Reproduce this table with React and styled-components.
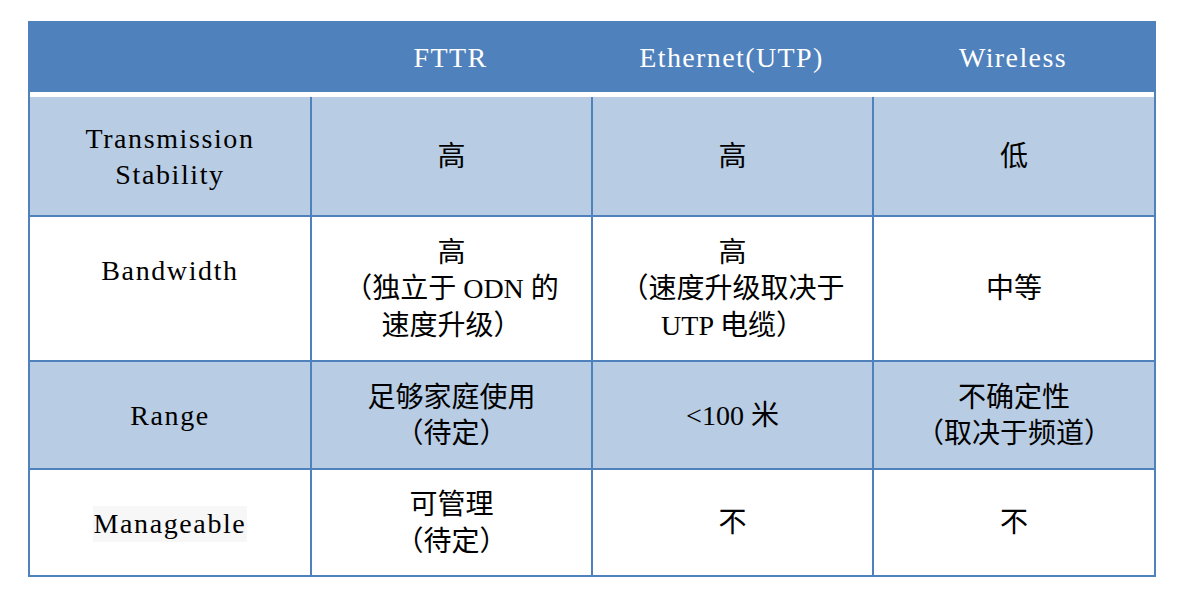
import styled, { createGlobalStyle } from "styled-components";

const GlobalStyle = createGlobalStyle`
body {
  margin: 0;
  background: #fff;
}
`

const rows = [
  {
    label: ["Transmission", "Stability"],
    shade: true,
    h: 118,
    cells: [["高"], ["高"], ["低"]],
  },
  {
    label: ["Bandwidth", "\u00a0"],
    shade: false,
    h: 143,
    cells: [["高", "（独立于 ODN 的速度升级）"], ["高", "（速度升级取决于 UTP 电缆）"], ["中等"]],
  },
  {
    label: ["Range"],
    shade: true,
    h: 106,
    cells: [["足够家庭使用", "（待定）"], ["<100 米"], ["不确定性", "（取决于频道）"]],
  },
  {
    label: ["Manageable"],
    mark: true,
    shade: false,
    h: 105,
    cells: [["可管理", "（待定）"], ["不"], ["不"]],
  },
]

const App = () => {
  return (
    <Page>
      <GlobalStyle />
      <Frame>
        <Head>
          <HeadCell />
          <HeadCell>FTTR</HeadCell>
          <HeadCell>Ethernet(UTP)</HeadCell>
          <HeadCell>Wireless</HeadCell>
        </Head>
        <Gap />
        {rows.map((r, i) => (
          <Row key={i} $last={i === rows.length - 1}>
            <LabelCell $shade={r.shade} $h={r.h}>
              {r.mark ? (
                <Mark>{r.label[0]}</Mark>
              ) : (
                r.label.map((l, j) => <Line key={j}>{l}</Line>)
              )}
            </LabelCell>
            {r.cells.map((c, j) => (
              <Cell key={j} $shade={r.shade} $h={r.h}>
                {c.map((l, k) => <Line key={k}>{l}</Line>)}
              </Cell>
            ))}
          </Row>
        ))}
      </Frame>
    </Page>
  )
}

export default App;

const Page = styled.div`
padding: 21px 0 0 28px;
`

const Frame = styled.div`
width: 1128px;
box-sizing: border-box;
border: 2px solid #4f81bd;
background: #fff;
`

const Head = styled.div`
display: grid;
grid-template-columns: 280px 281px 281px 282px;
height: 69px;
background: #4f81bd;
`

const HeadCell = styled.div`
display: flex;
align-items: center;
justify-content: center;
padding-top: 1px;
color: #fff;
font-family: "Liberation Serif", "Noto Sans CJK SC", serif;
font-size: 28px;
letter-spacing: 1.4px;
`

const Gap = styled.div`
height: 5px;
background: #fff;
`

const Row = styled.div`
display: grid;
grid-template-columns: 280px 279px 279px 280px;
column-gap: 2px;
background: #4f81bd;
border-bottom: ${p => (p.$last ? "0" : "2px solid #4f81bd")};
`

const Cell = styled.div`
display: flex;
flex-direction: column;
align-items: center;
justify-content: center;
box-sizing: border-box;
height: ${p => p.$h}px;
padding: 2px 24px 0;
background: ${p => (p.$shade ? "#b8cce4" : "#fff")};
color: #000;
font-family: "Liberation Serif", "Noto Sans CJK SC", serif;
font-size: 28px;
line-height: 36.5px;
text-align: center;
`

const LabelCell = styled(Cell)`
letter-spacing: 1.6px;
`

const Line = styled.div`
white-space: normal;
`

const Mark = styled.span`
background: #f7f7f7;
padding: 0 1px;
line-height: 36px;
`
